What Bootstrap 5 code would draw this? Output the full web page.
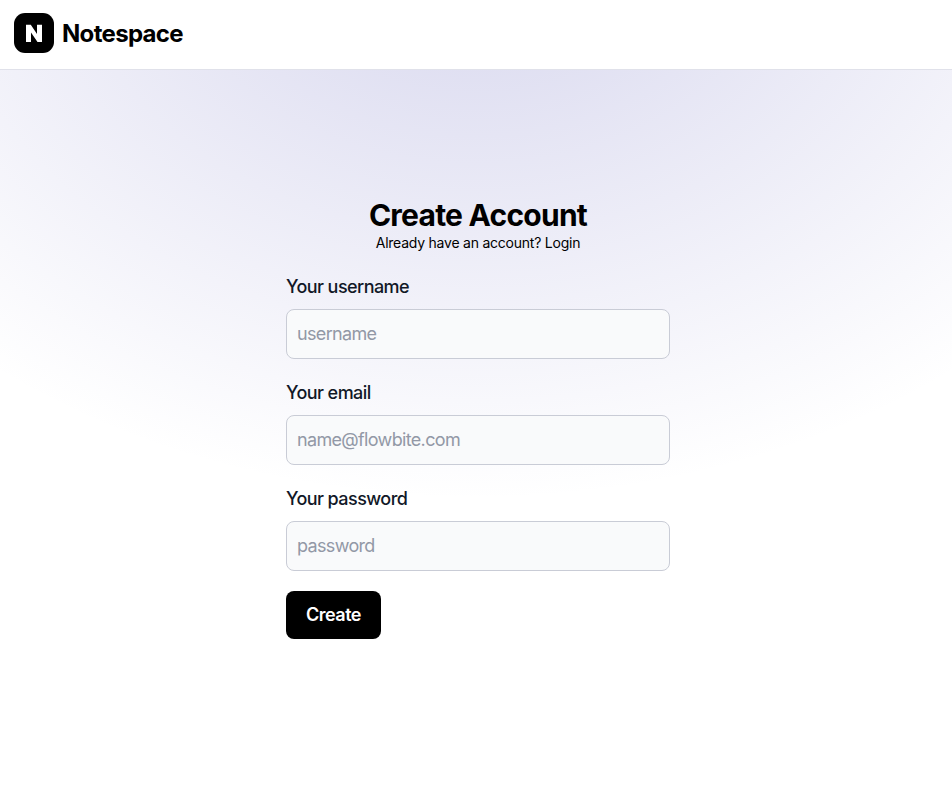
<!DOCTYPE html>
<html lang="en">
<head>
<meta charset="utf-8">
<meta name="viewport" content="width=device-width, initial-scale=1">
<title>Notespace</title>
<link href="https://cdn.jsdelivr.net/npm/bootstrap@5.3.0/dist/css/bootstrap.min.css" rel="stylesheet">
<style>
body { font-family: Inter, "Liberation Sans", sans-serif; color: #000; background: #fff; }
.topbar { height: 70px; padding: 0 14px 4px; border-bottom: 1px solid #e0e1ea; background: #fff; }
.brand-icon { width: 40px; height: 40px; border-radius: 11px; }
.brand-name { font-size: 24px; font-weight: 700; line-height: 32px; letter-spacing: -.68px; padding-top: 2px; }
.page-area { background: radial-gradient(ellipse 80% 80% at 50% -20%, rgba(120,119,198,.3), rgba(255,255,255,0)); padding: 127px 0 0 4px; }
.signup { width: 384px; }
.signup h1 { font-size: 30px; line-height: 36px; font-weight: 700; letter-spacing: -.75px; }
.subline { font-size: 14px; line-height: 20px; letter-spacing: -.23px; }
.signup .form-label { font-size: 18px; line-height: 28px; font-weight: 500; color: #111827; margin-bottom: 8px; letter-spacing: -.56px; }
.signup .form-control { height: 50px; padding: 9px 10px 11px; font-size: 18px; line-height: 28px; border: 1px solid #c9ccd6; border-radius: 8px; background: #f9fafb; letter-spacing: -.66px; }
.signup .form-control::placeholder { color: #9298a6; opacity: 1; }
.btn-create { width: 95px; height: 48px; font-size: 18px; font-weight: 600; line-height: 28px; border-radius: 8px; letter-spacing: -.5px; background: #000; color: #fff; }
</style>
<script src="https://cdn.jsdelivr.net/npm/bootstrap@5.3.0/dist/js/bootstrap.bundle.min.js"></script>
</head>
<body class="d-flex flex-column min-vh-100">
<header class="topbar d-flex align-items-center gap-2">
  <span class="brand-icon bg-black text-white d-flex align-items-center justify-content-center">
    <svg width="16" height="18" viewBox="0 0 16 18" fill="currentColor" aria-hidden="true"><path d="M0 .7H4.8L11 10V.7H16V18H11.5L5 8.6V18H0Z"/></svg>
  </span>
  <span class="brand-name">Notespace</span>
</header>
<main class="page-area flex-grow-1">
  <form class="signup mx-auto">
    <div class="text-center mb-3 pb-1">
      <h1 class="m-0">Create Account</h1>
      <p class="subline m-0">Already have an account? <a href="#" class="text-reset text-decoration-none">Login</a></p>
    </div>
    <div class="mb-3 pb-1">
      <label class="form-label d-block" for="username">Your username</label>
      <input class="form-control" id="username" type="text" placeholder="username">
    </div>
    <div class="mb-3 pb-1">
      <label class="form-label d-block" for="email">Your email</label>
      <input class="form-control" id="email" type="email" placeholder="name@flowbite.com">
    </div>
    <div class="mb-3 pb-1">
      <label class="form-label d-block" for="password">Your password</label>
      <input class="form-control" id="password" type="password" placeholder="password">
    </div>
    <button type="button" class="btn btn-create p-0 border-0">Create</button>
  </form>
</main>
</body>
</html>
